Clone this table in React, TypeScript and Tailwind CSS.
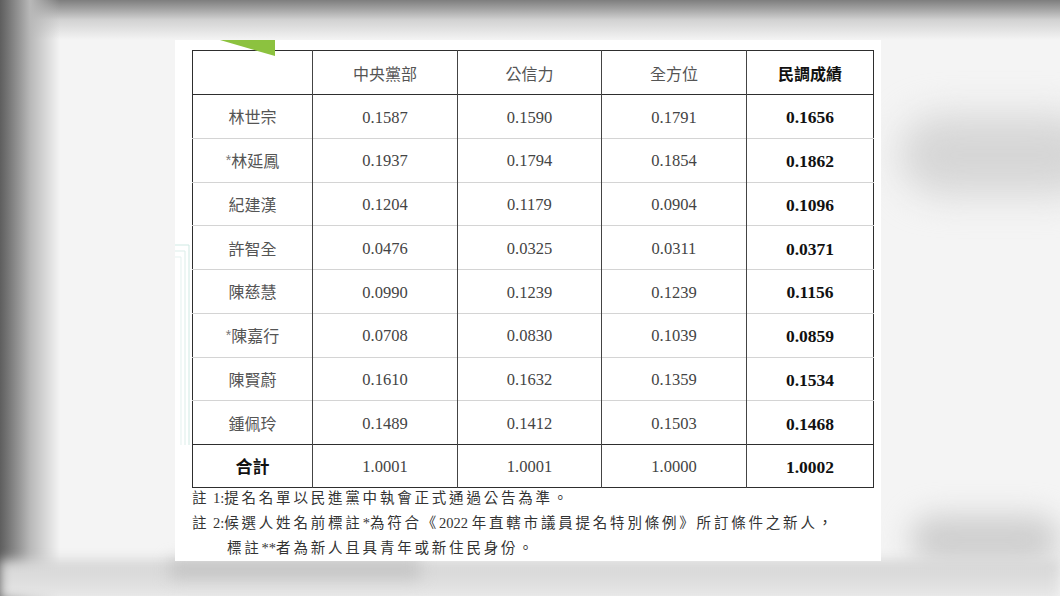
import React from "react";

const rows: [string, string, string, string, string][] = [
  ["林世宗", "0.1587", "0.1590", "0.1791", "0.1656"],
  ["*林延鳳", "0.1937", "0.1794", "0.1854", "0.1862"],
  ["紀建漢", "0.1204", "0.1179", "0.0904", "0.1096"],
  ["許智全", "0.0476", "0.0325", "0.0311", "0.0371"],
  ["陳慈慧", "0.0990", "0.1239", "0.1239", "0.1156"],
  ["*陳嘉行", "0.0708", "0.0830", "0.1039", "0.0859"],
  ["陳賢蔚", "0.1610", "0.1632", "0.1359", "0.1534"],
  ["鍾佩玲", "0.1489", "0.1412", "0.1503", "0.1468"],
];

const sans = "font-['Noto_Sans_CJK_TC','Noto_Sans',sans-serif]";
const serif = "font-['Liberation_Serif','Noto_Sans_CJK_TC',serif]";

function Name({ text }: { text: string }) {
  if (text.startsWith("*")) {
    return (
      <span>
        <span className="relative -top-[2px] text-[14px] text-[#777] font-['Liberation_Sans',sans-serif]">*</span>
        {text.slice(1)}
      </span>
    );
  }
  return <span>{text}</span>;
}

function L({ children }: { children: React.ReactNode }) {
  return <span className="tracking-normal leading-none font-['Liberation_Serif',serif]">{children}</span>;
}

export default function App() {
  return (
    <div className="relative w-[1060px] h-[596px] overflow-hidden bg-[#f4f4f4]">
      {/* blurred backdrop */}
      <div className="absolute left-0 top-0 w-full h-[40px] bg-gradient-to-b from-[#7e7e7e] via-[#d2d2d2] to-[#f4f4f4]" />
      <div className="absolute left-0 top-0 w-[60px] h-full bg-gradient-to-r from-[#5e5e5e] via-[#b8b8b8] to-transparent" />
      <div className="absolute left-[900px] top-[115px] w-[200px] h-[80px] rounded-full bg-[#d6d6d6] blur-[18px]" />
      <div className="absolute left-[910px] top-[515px] w-[150px] h-[50px] rounded-full bg-[#cfcfcf] blur-[14px]" />
      <div className="absolute left-0 top-[560px] w-full h-[40px] bg-gradient-to-b from-[#d4d4d4] to-[#e8e8e8] blur-[6px]" />
      <div className="absolute left-[170px] top-[560px] w-[250px] h-[18px] bg-[#c4c4c4] blur-[8px]" />

      <div className="relative pl-[175px] pt-[40px]">
        <div className="relative w-[706px] h-[521px] bg-white pl-[17px] pt-[10px]">
          {/* green accent */}
          <svg className="absolute left-[45px] top-0" width="55" height="17" viewBox="0 0 55 17">
            <polygon points="0,0 55,0 55,16" fill="#8cc23f" />
          </svg>
          {/* faint decorative lines */}
          <svg className="absolute left-0 top-[195px] opacity-50" width="20" height="220" viewBox="0 0 20 220">
            <path d="M0 10 H14 V210" fill="none" stroke="#9fd3c7" strokeWidth="1" />
            <path d="M0 16 H10 V210" fill="none" stroke="#b8dcd4" strokeWidth="1" />
            <path d="M0 22 H6 V210" fill="none" stroke="#c9e4de" strokeWidth="1" />
          </svg>

          <table className="table-fixed border-collapse border-[1.5px] border-[#2e2e2e]">
            <colgroup>
              <col className="w-[120px]" />
              <col className="w-[145px]" />
              <col className="w-[144px]" />
              <col className="w-[145px]" />
              <col className="w-[127px]" />
            </colgroup>
            <thead>
              <tr className="h-[44px] border-b-[1.5px] border-[#2e2e2e]">
                <th className="border-r border-[#444]" />
                {["中央黨部", "公信力", "全方位"].map((h) => (
                  <th
                    key={h}
                    className={`border-r border-[#444] text-center text-[16px] font-normal text-[#555] ${sans}`}
                  >
                    {h}
                  </th>
                ))}
                <th className={`text-center text-[16px] font-bold text-[#111] ${sans}`}>民調成績</th>
              </tr>
            </thead>
            <tbody>
              {rows.map((r, i) => (
                <tr
                  key={r[0]}
                  className={`h-[43.75px] ${i < rows.length - 1 ? "border-b border-[#d4d4d4]" : ""}`}
                >
                  <td className={`border-r border-[#444] text-center text-[16px] text-[#555] ${sans}`}>
                    <Name text={r[0]} />
                  </td>
                  {r.slice(1, 4).map((v, j) => (
                    <td
                      key={j}
                      className={`border-r border-[#444] pt-[3px] text-center text-[16.5px] text-[#444] ${serif}`}
                    >
                      {v}
                    </td>
                  ))}
                  <td className={`pt-[2px] text-center text-[17.5px] font-bold text-[#111] ${serif}`}>{r[4]}</td>
                </tr>
              ))}
              <tr className="h-[43px] border-t-[1.5px] border-[#2e2e2e]">
                <td className={`border-r border-[#444] text-center text-[17px] font-bold text-[#111] ${sans}`}>
                  合計
                </td>
                {["1.0001", "1.0001", "1.0000"].map((v, j) => (
                  <td
                    key={j}
                    className={`border-r border-[#444] pt-[3px] text-center text-[16.5px] text-[#444] ${serif}`}
                  >
                    {v}
                  </td>
                ))}
                <td className={`pt-[2px] text-center text-[17.5px] font-bold text-[#111] ${serif}`}>1.0002</td>
              </tr>
            </tbody>
          </table>

          <div
            className={`-mt-[4px] text-[14.5px] leading-[25px] tracking-[2.8px] text-[#333] font-['Noto_Sans_CJK_TC',serif]`}
          >
            <div className="h-[25px] whitespace-nowrap">
              註<L> 1:</L>提名名單以民進黨中執會正式通過公告為準。
            </div>
            <div className="h-[25px] whitespace-nowrap">
              註<L> 2:</L>候選人姓名前標註<L>*</L>為符合《<L>2022 </L>年直轄市議員提名特別條例》所訂條件之新人，
            </div>
            <div className="h-[25px] whitespace-nowrap pl-[35px]">
              標註<L>**</L>者為新人且具青年或新住民身份。
            </div>
          </div>
        </div>
      </div>
    </div>
  );
}
